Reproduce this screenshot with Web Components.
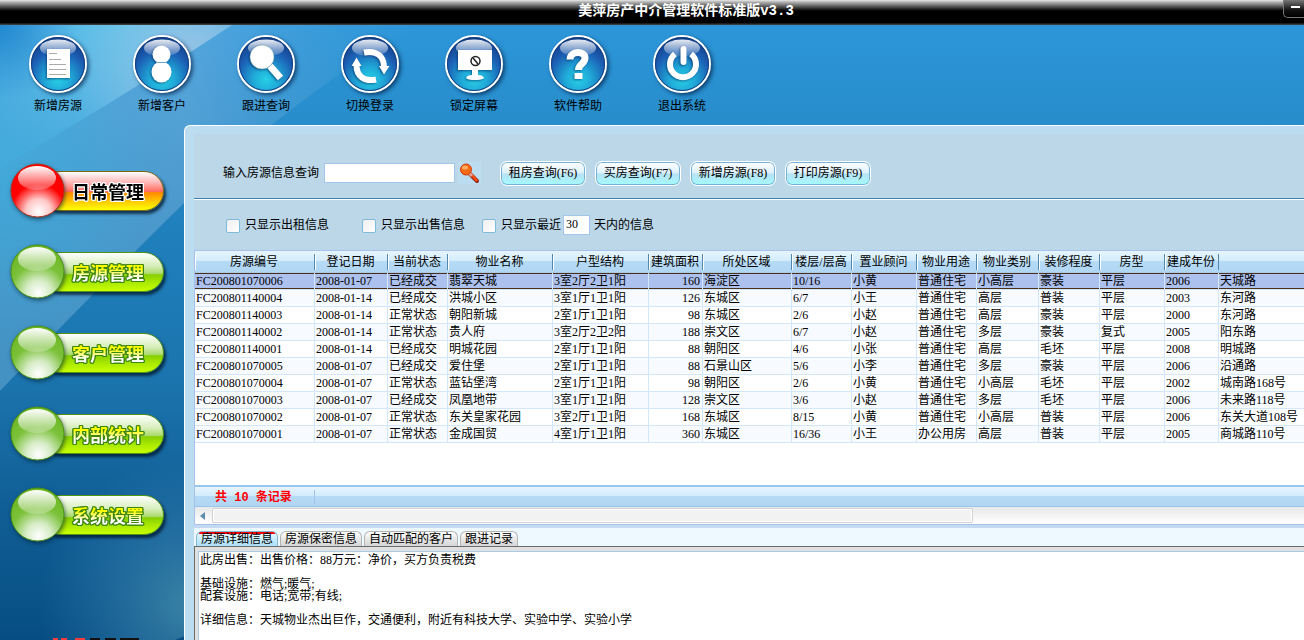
<!DOCTYPE html>
<html lang="zh-CN">
<head>
<meta charset="utf-8">
<title>美萍房产中介管理软件标准版v3.3</title>
<style>
  html, body { margin: 0; }
  body { font: 12px/16px "Liberation Serif", "Noto Sans CJK SC", sans-serif; color: #000; }
</style>
</head>
<body>
<estate-app></estate-app>
<script>
const base = `*, *::before { box-sizing: border-box; } button, input, textarea { font: inherit; color: inherit; margin: 0; padding: 0; }`;
function define(name, render, setup) {
  customElements.define(name, class extends HTMLElement {
    connectedCallback() {
      if (this.shadowRoot) return;
      const root = this.attachShadow({ mode: 'open' });
      const t = document.createElement('template');
      t.innerHTML = `<style>${base}</style>` + render(this);
      root.append(t.content.cloneNode(true));
      if (setup) setup(root, this);
    }
  });
}

/* Title bar */
define('title-bar', () => `
<style>
  :host { display: flex; height: 25px; justify-content: center; padding-left: 68px; position: relative;
    background: linear-gradient(#e8e8e8 0, #b4b4b4 2px, #777 5px, #222 9px, #000 11px, #000 23px, #3a3a3a 24px); }
  h1 { margin: 0; font: bold 14px/22px "Liberation Mono", "Noto Sans CJK SC", monospace; color: #fff; }
  button { position: absolute; right: 0; top: 0; width: 21px; height: 18px; border: 1px solid #777; border-width: 0 0 1px 1px;
    border-radius: 0 0 0 5px; background: linear-gradient(#777, #111 10px, #000); }
  button::before { content: ""; display: block; width: 9px; height: 2px; margin: 0 0 3px 7px; background: #fff; }
</style>
<h1><slot></slot></h1><button aria-label="最小化"></button>`);

/* Decorative light beams behind toolbar and sidebar */
define('light-beams', () => `
<style>:host { display: block; position: absolute; inset: 25px 0 0 0; overflow: hidden;
  background: linear-gradient(#2c96d9 0, #288dcb 100px, #2082bf 180px, #1b73ac 365px, #115f97 475px, #064e82 615px); }
  svg { display: block; }</style>
<svg width="560" height="615" viewBox="0 25 560 615" aria-hidden="true">
  <defs>
    <linearGradient id="b" gradientUnits="userSpaceOnUse" x1="60" y1="60" x2="420" y2="60">
      <stop offset="0" stop-color="#8fc9ea" stop-opacity=".35"/><stop offset=".35" stop-color="#a5c6e8" stop-opacity=".34"/><stop offset="1" stop-color="#6fb5e0" stop-opacity="0"/></linearGradient>
    <radialGradient id="c" gradientUnits="userSpaceOnUse" cx="125" cy="15" r="175">
      <stop offset="0" stop-color="#5cc8ea" stop-opacity=".85"/><stop offset=".5" stop-color="#5cc0ea" stop-opacity=".6"/><stop offset="1" stop-color="#44aee2" stop-opacity=".4"/></radialGradient>
    <radialGradient id="d" gradientUnits="userSpaceOnUse" cx="190" cy="60" r="120">
      <stop offset="0" stop-color="#a8c8e6" stop-opacity=".8"/><stop offset="1" stop-color="#a0c6e8" stop-opacity="0"/></radialGradient>
    <radialGradient id="e" gradientUnits="userSpaceOnUse" cx="0" cy="25" r="75">
      <stop offset="0" stop-color="#2288d0"/><stop offset="1" stop-color="#2288d0" stop-opacity="0"/></radialGradient>
    <radialGradient id="l" gradientUnits="userSpaceOnUse" cx="0" cy="180" r="150">
      <stop offset="0" stop-color="#3cb4e0" stop-opacity=".5"/><stop offset="1" stop-color="#3cb4e0" stop-opacity="0"/></radialGradient>
    <radialGradient id="g" gradientUnits="userSpaceOnUse" cx="190" cy="605" r="150">
      <stop offset="0" stop-color="#5aa3b8" stop-opacity=".6"/><stop offset=".5" stop-color="#4f97c0" stop-opacity=".3"/><stop offset="1" stop-color="#4a94c8" stop-opacity="0"/></radialGradient>
  </defs>
  <path d="M0 25H420Q300 90 184 203Q90 295 0 391Z" fill="url(#b)"/>
  <path d="M0 25H420Q300 90 184 203Q90 295 0 391Z" fill="url(#l)"/>
  <path d="M0 25H232Q110 105 0 168Z" fill="url(#c)"/>
  <path d="M0 25H232Q110 105 0 168Z" fill="url(#d)"/>
  <path d="M0 25H232Q110 105 0 168Z" fill="url(#e)"/>
  <path d="M0 440H190V634L175 640H0Z" fill="url(#g)"/>
  <path d="M53 639h5m3 0h6m8 0h10" stroke="#f43c3c" stroke-width="2"/>
  <path d="M90 639h10m5 0h11m4 0h19" stroke="#111" stroke-width="2"/>
</svg>`);

/* Round glossy toolbar button */
const glyphs = {
  doc: `<path fill="#fff" d="M18 14h23v29H18z"/><path d="M20 18.5h8M20 24.500h12M20 29.500h17M20 34.500h17M20 39.500h17" stroke="#aaa"/>`,
  user: `<circle cx="28.500" cy="19.500" r="9" fill="#fff"/><ellipse cx="28.500" cy="37" rx="10" ry="10.500" fill="#fff"/><path d="M23 27.500h11" stroke="#6fa6cc"/>`,
  find: `<path d="M33 31l10.500 12" stroke="#fff" stroke-width="7"/><circle cx="25" cy="22" r="12" fill="#fff" stroke="#7aa" stroke-width=".5"/>`,
  swap: `<g fill="none" stroke="#fff" stroke-width="6"><path d="M23 17.500C35 15 43 21 43 32"/><path d="M35 44.500C23 47 15.500 41 15.500 30"/></g><path fill="#fff" d="M38 31H48.500l-5.500 8.500zM10.500 31H20.500l-5-8.500z"/>`,
  lock: `<path fill="#fff" d="M13 15h34v20H33v5q5 0 6 3-2 2-9 2t-9-2q1-3 6-3v-5H13z"/><circle cx="30.500" cy="26" r="4.500" fill="none" stroke="#222" stroke-width="1.500"/><path d="M28 23l5 6" stroke="#222" stroke-width="1.500"/>`,
  help: `<path d="M21 24.500C21 15.500 36 15.500 36 23C36 29 29.500 29 29.500 35" fill="none" stroke="#fff" stroke-width="7"/><path fill="#fff" d="M25.500 38h8v6h-8z"/>`,
  power: `<path d="M22 19A13 13 0 1 0 38 19" fill="none" stroke="#fff" stroke-width="6"/><path d="M30.500 14v13" stroke="#fff" stroke-width="6" stroke-linecap="round"/>`
};
define('tool-button', el => `
<style>
  :host { display: block; width: 104px; }
  button { display: flex; flex-direction: column; align-items: center; gap: 5px; width: 100%; border: 0; background: none; }
  svg { display: block; overflow: visible; filter: drop-shadow(2px 2px 2px rgba(0,30,70,.7)); }
  .g { filter: drop-shadow(-1px 1px 1px rgba(0,40,90,.6)); }
</style>
<button><svg width="58" height="58" viewBox="0 0 58 58" aria-hidden="true">
  <defs><radialGradient id="f" cx=".5" cy=".78" r=".75"><stop offset="0" stop-color="#27cfe6"/><stop offset=".3" stop-color="#20a9d8"/><stop offset=".68" stop-color="#1b5fb4"/><stop offset="1" stop-color="#123c86"/></radialGradient>
  <linearGradient id="h" x2="0" y2="1"><stop offset="0" stop-color="#fff"/><stop offset="1" stop-color="#fff" stop-opacity=".15"/></linearGradient></defs>
  <circle cx="29" cy="29" r="28" fill="url(#f)" stroke="#fff" stroke-width="2"/>
  <circle cx="29" cy="29" r="26.500" fill="none" stroke="#14407e" stroke-width="1"/>
  <ellipse cx="29" cy="13" rx="18" ry="8.500" fill="url(#h)" opacity=".9"/>
  <g class="g">${glyphs[el.getAttribute('icon')]}</g></svg>
<slot></slot></button>`);

/* Sidebar pill with glass ball */
define('nav-button', el => {
  const on = el.hasAttribute('active');
  return `
<style>
  :host { display: block; }
  button { display: flex; align-items: center; width: 154px; height: 55px; border: 0; background: none; text-align: left; }
  svg { flex: none; position: relative; z-index: 1; overflow: visible; filter: drop-shadow(1px 2px 2px rgba(0,30,50,.6)); }
  .pill { flex: 1; height: 40px; margin-left: -25px; padding-left: 31px; border: 1px solid ${on ? '#7d6a10' : '#4f9412'}; border-radius: 20px;
    box-shadow: 2px 3px 3px rgba(0,20,40,.75);
    background: ${on ? 'linear-gradient(#fff 0, #ffb0b0 30%, #ff6a5a 52%, #ff8a00 54%, #ffd000 80%, #ff0 100%)'
                    : 'linear-gradient(#fff 0, #d5eeb8 35%, #a8d868 55%, #86cf00 57%, #a6e600 75%, #c8ff00 100%)'}; }
  .text { display: block; font: bold 18px/38px "Noto Sans CJK SC", sans-serif; white-space: nowrap; width: 72px;
    ${on ? 'color: #000; filter: drop-shadow(1px 0 #fff) drop-shadow(-1px 0 #fff) drop-shadow(0 1px #fff) drop-shadow(0 -1px #fff);'
      : 'color: transparent; background: linear-gradient(#ff0 40%, #fff 65%); background-clip: text; -webkit-background-clip: text; filter: drop-shadow(1px 0 #3d8610) drop-shadow(-1px 0 #3d8610) drop-shadow(0 1px #3d8610) drop-shadow(0 -1px #3d8610);'} }
</style>
<button><svg width="55" height="55" viewBox="0 0 55 55" aria-hidden="true">
  <defs><radialGradient id="a" cx=".52" cy=".9" r=".95"><stop offset="0" stop-color="#fff"/><stop offset=".25" stop-color="${on ? '#ffc8c8' : '#d6ecc6'}"/><stop offset=".55" stop-color="${on ? '#f00' : '#7cc13a'}"/><stop offset="1" stop-color="${on ? '#f00' : '#66b41c'}"/></radialGradient>
  <linearGradient id="s" x2="0" y2="1"><stop offset="0" stop-color="#fff"/><stop offset="1" stop-color="#fff" stop-opacity=".2"/></linearGradient></defs>
  <circle cx="27.500" cy="27.500" r="26.500" fill="url(#a)" stroke="${on ? '#b5301c' : '#4c9414'}"/>
  <ellipse cx="27" cy="15" rx="19" ry="12" fill="url(#s)"/></svg>
<span class="pill"><span class="text"><slot></slot></span></span></button>`; });

define('glass-button', () => `
<style>
  :host { display: block; }
  button { height: 25px; width: 86px; padding: 0 4px; border: 1px solid #fff; border-radius: 7px; white-space: nowrap;
    box-shadow: inset 0 0 0 1px #76b2d4; background: linear-gradient(#fff, #dcf0fa 48%, #b6e2f4 52%, #a4fbff); }
</style><button><slot></slot></button>`);

/* Search box and filters */
define('search-panel', () => `
<style>
  :host { display: block; background: #bcd7e8; }
  form { display: flex; align-items: center; height: 65px; padding: 14px 0 0 29px; border-bottom: 1px solid #3b83b5; white-space: nowrap; }
  .filters { border: 0; border-top: 1px solid #fff; height: 51px; padding: 0 0 1px 32px; }
  input[type=search], input[type=text] { height: 20px; border: 1px solid #a4c6ea; background: #fff; border-radius: 0; appearance: none; outline: 0; }
  input[type=search] { width: 131px; margin: 0 3px 0 5px; }
  input[type=text] { width: 27px; padding: 0 2px; margin: 0 4px 0 2px; }
  input[type=checkbox] { appearance: none; width: 14px; height: 14px; border: 1px solid #7fbadb; border-radius: 2px; background: linear-gradient(135deg, #eee, #fff); margin: 2px 5px 0 0; }
  label { display: flex; align-items: center; }
  label + label { margin-left: 33px; }
  label + label ~ label { margin-left: 17px; }
  .go { width: 23px; height: 22px; border: 0; background: #bcdcf0; margin-right: 19px; }
  .go svg { display: block; }
  .acts { display: flex; gap: 9px; }
</style>
<form onsubmit="return false">
  <label for="q">输入房源信息查询</label><input type="search" id="q">
  <button class="go" aria-label="查询"><svg width="23" height="22" viewBox="0 0 23 22"><path d="M12 12l7 7" stroke="#8d2a10" stroke-width="4" stroke-linecap="round"/><path d="M14 13l5 6" stroke="#ff4a10" stroke-width="2.500"/><path d="M11 11l3 3" stroke="#e9a49a" stroke-width="3"/><circle cx="8" cy="7.500" r="5.500" fill="#f26a14" stroke="#d8380c"/><ellipse cx="7" cy="5.500" rx="3" ry="2" fill="#ffab63"/></svg></button>
  <div class="acts"><glass-button>租房查询(F6)</glass-button><glass-button>买房查询(F7)</glass-button><glass-button>新增房源(F8)</glass-button><glass-button>打印房源(F9)</glass-button></div>
</form>
<form class="filters" onsubmit="return false">
  <label><input type="checkbox">只显示出租信息</label>
  <label><input type="checkbox">只显示出售信息</label>
  <label><input type="checkbox">只显示最近</label>
  <input type="text" id="days" value="30"><label for="days" style="margin:0">天内的信息</label>
</form>`);

/* Listings grid */
const cols = [['房源编号',120],['登记日期',73],['当前状态',60],['物业名称',105],['户型结构',96],['建筑面积',54],['所处区域',89],['楼层/层高',60],['置业顾问',65],['物业用途',60],['物业类别',62],['装修程度',61],['房型',65],['建成年份',54],['',0]];
const rows = `FC200801070006|2008-01-07|已经成交|翡翠天城|3室2厅2卫1阳|160|海淀区|10/16|小黄|普通住宅|小高层|豪装|平层|2006|天城路
FC200801140004|2008-01-14|已经成交|洪城小区|3室1厅1卫1阳|126|东城区|6/7|小王|普通住宅|高层|普装|平层|2003|东河路
FC200801140003|2008-01-14|正常状态|朝阳新城|2室1厅1卫1阳|98|东城区|2/6|小赵|普通住宅|高层|豪装|平层|2000|东河路
FC200801140002|2008-01-14|正常状态|贵人府|3室2厅2卫2阳|188|崇文区|6/7|小赵|普通住宅|多层|豪装|复式|2005|阳东路
FC200801140001|2008-01-14|已经成交|明城花园|2室1厅1卫1阳|88|朝阳区|4/6|小张|普通住宅|高层|毛坯|平层|2008|明城路
FC200801070005|2008-01-07|已经成交|爱住堡|2室1厅1卫1阳|88|石景山区|5/6|小李|普通住宅|多层|豪装|平层|2006|沿通路
FC200801070004|2008-01-07|正常状态|蓝钻堡湾|2室1厅1卫1阳|98|朝阳区|2/6|小黄|普通住宅|小高层|毛坯|平层|2002|城南路168号
FC200801070003|2008-01-07|已经成交|凤凰地带|3室1厅1卫1阳|128|崇文区|3/6|小赵|普通住宅|多层|毛坯|平层|2006|未来路118号
FC200801070002|2008-01-07|正常状态|东关皇家花园|3室2厅1卫1阳|168|东城区|8/15|小黄|普通住宅|小高层|普装|平层|2006|东关大道108号
FC200801070001|2008-01-07|正常状态|金成国贸|4室1厅1卫1阳|360|东城区|16/36|小王|办公用房|高层|普装|平层|2005|商城路110号`.split('\n').map(r => r.split('|'));
define('listing-grid', () => `
<style>
  :host { display: block; background: #fff; border: 1px solid #a6c1ec; border-right: 0; }
  .body { padding-bottom: 42px; }
  table { width: 100%; table-layout: fixed; border-spacing: 0; }
  th, td { padding: 0 2px 0 1px; white-space: nowrap; overflow: hidden; line-height: 16px; height: 17px; text-align: left; }
  th { height: 22px; padding: 0 2px 0 0; font-weight: normal; text-align: center; border-bottom: 1px solid #a9c9e4;
    background: linear-gradient(#5088b0, #5088b0) right 0 center / 1px 16px no-repeat, linear-gradient(#fff, #fff) left 0 center / 1px 16px no-repeat, linear-gradient(#e6f5fe, #d2ebfb 50%, #b6dbf6 50%, #b0d6f4); }
  th:last-child { background: linear-gradient(#e6f5fe, #d2ebfb 50%, #b6dbf6 50%, #b0d6f4); }
  td { border-right: 1px solid #d2e7fb; border-bottom: 1px solid #d2e7fb; }
  td:last-child { border-right: 0; }
  tbody tr:nth-child(even) { background: #f7faff; }
  tbody tr[aria-selected] td { background: #adc1ee; box-shadow: inset 0 1px #4a3018, inset 0 -1px #4a3018; }
  td:nth-child(6) { text-align: right; }
  .sum { display: flex; align-items: center; height: 22px; border-top: 2px solid #98c5ee; border-bottom: 1px solid #98c5ee;
    background: linear-gradient(#e6f5fe, #d2ebfb 45%, #b6dbf6 45%, #b0d6f4); }
  .sum b { width: 120px; padding: 2px 0 0 20px; border-right: 1px solid #a6c1ec; color: #f00; line-height: 12px; white-space: pre;
    font-family: "Liberation Mono", "Noto Sans CJK SC", monospace; }
  .scroll { display: flex; align-items: center; height: 17px; padding-left: 5px; background: linear-gradient(#e8e8e8, #fff); }
  .scroll i { display: block; height: 15px; margin-left: 7px; flex: 0 0 70%; max-width: 761px; border: 1px solid #d2d2d2; border-radius: 2px; background: #f2f2f2; box-shadow: inset 0 0 0 1px #fff; }
</style>
<div class="body"><table>
<colgroup>${cols.map(c => c[1] ? `<col style="width:${c[1]}px">` : '<col>').join('')}</colgroup>
<thead><tr>${cols.map(c => `<th>${c[0]}</th>`).join('')}</tr></thead>
<tbody>${rows.map((r, i) => `<tr${i ? '' : ' aria-selected="true"'}>${r.map(c => `<td>${c}</td>`).join('')}</tr>`).join('')}</tbody>
</table></div>
<div class="sum"><b>共 10 条记录</b></div>
<div class="scroll"><svg width="5" height="8" viewBox="0 0 5 8"><path d="M5 0v8L0 4z" fill="#5d8bab"/></svg><i></i></div>`);

/* Detail tabs */
define('detail-tabs', () => `
<style>
  :host { display: flex; flex-direction: column; flex: 1; border-top: 3px solid #c5d9f0; background: #edf9ff; }
  .tabs { display: flex; align-items: flex-end; gap: 2px; height: 19px; padding-left: 2px; border-bottom: 1px solid #6c6c6c; }
  button { height: 15px; padding: 0 4px; border: 1px solid #b4b4b4; border-bottom: 0; border-radius: 6px 6px 0 0; line-height: 14px;
    background: linear-gradient(#fff, #e8e8e8 50%, #d6d6d6); white-space: nowrap; }
  button[aria-selected=true] { border-color: #86b6cc; background: linear-gradient(#f00, #f00) center top / 76px 2px no-repeat, linear-gradient(#f4fcff, #c8ecfa 50%, #aee0f6); }
  .pane { display: flex; flex: 1; border-left: 1px solid #6c6c6c; padding: 4px 0 0 3px; background: #e0e0e0; }
  textarea { display: block; flex: 1; min-height: 88px; border: 1px solid #a9cbe4; border-width: 1px 0 0 1px; border-radius: 0; resize: none; outline: 0; overflow: hidden;
    padding: 2px 2px 0 1px; line-height: 12px; background: #fff; }
</style>
<div class="tabs" role="tablist"><button role="tab" aria-selected="true">房源详细信息</button><button role="tab">房源保密信息</button><button role="tab">自动匹配的客户</button><button role="tab">跟进记录</button></div>
<div class="pane"><textarea readonly aria-label="房源详细信息">此房出售：出售价格：88万元：净价，买方负责税费

基础设施：燃气;暖气;
配套设施：电话;宽带;有线;

详细信息：天城物业杰出巨作，交通便利，附近有科技大学、实验中学、实验小学</textarea></div>`);

define('estate-app', () => `
<style>
  :host { display: flex; flex-direction: column; min-height: 100vh; position: relative; overflow: hidden; }
  title-bar, .tools, .main { position: relative; }
  .tools { display: flex; height: 100px; padding: 10px 0 0 6px; }
  .main { display: grid; grid-template-columns: 184px minmax(0, 1fr); flex: 1; }
  nav { display: flex; flex-direction: column; gap: 26px; padding: 38px 0 0 10px; }
  main { display: flex; flex-direction: column; min-width: 0; border: 1px solid #fff; border-width: 1px 0 0 1px; border-radius: 6px 0 0 0; background: #bcdcf0; padding: 8px 0 0 9px; }
</style>
<light-beams></light-beams>
<title-bar>美萍房产中介管理软件标准版v3.3</title-bar>
<div class="tools"><tool-button icon="doc">新增房源</tool-button><tool-button icon="user">新增客户</tool-button><tool-button icon="find">跟进查询</tool-button><tool-button icon="swap">切换登录</tool-button><tool-button icon="lock">锁定屏幕</tool-button><tool-button icon="help">软件帮助</tool-button><tool-button icon="power">退出系统</tool-button></div>
<div class="main">
  <nav><nav-button active>日常管理</nav-button><nav-button>房源管理</nav-button><nav-button>客户管理</nav-button><nav-button>内部统计</nav-button><nav-button>系统设置</nav-button></nav>
  <main><search-panel></search-panel><listing-grid></listing-grid><detail-tabs></detail-tabs></main>
</div>`);
</script>
</body>
</html>
